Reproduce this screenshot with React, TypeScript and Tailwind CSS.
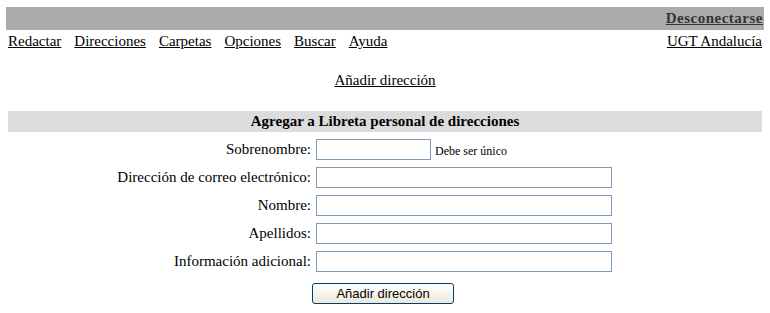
import React from "react";

const links = ["Redactar", "Direcciones", "Carpetas", "Opciones", "Buscar", "Ayuda"];

const fields = [
  { label: "Sobrenombre:", short: true },
  { label: "Dirección de correo electrónico:" },
  { label: "Nombre:" },
  { label: "Apellidos:" },
  { label: "Información adicional:" },
];

const App = () => {
  return (
    <div className="h-[313px] w-[770px] bg-white pt-[7px] font-['Liberation_Serif',serif] text-[15px] text-black">
      <div className="mx-[6px] flex h-[23px] items-center justify-end bg-[#ababab] pr-[1px]">
        <a href="#" className="font-bold tracking-[0.5px] text-[#333] underline">
          Desconectarse
        </a>
      </div>

      <div className="flex h-[22px] items-center justify-between px-[8px]">
        <div className="flex gap-[13px]">
          {links.map((l) => (
            <a key={l} href="#" className="underline">
              {l}
            </a>
          ))}
        </div>
        <a href="#" className="underline">
          UGT Andalucía
        </a>
      </div>

      <div className="mt-[17px] flex justify-center">
        <a href="#" className="underline">
          Añadir dirección
        </a>
      </div>

      <div className="mx-[8px] mt-[19px] flex h-[21px] items-center justify-center bg-[#dcdcdc] font-bold">
        Agregar a Libreta personal de direcciones
      </div>

      <div className="mt-[7px] grid grid-cols-[312px_1fr] gap-y-[7px]">
        {fields.map((f) => (
          <React.Fragment key={f.label}>
            <label className="flex h-[21px] items-center justify-end pr-[1px]">{f.label}</label>
            <div className="flex items-center pl-[4px]">
              <input
                className={
                  f.short
                    ? "h-[21px] w-[115px] border border-[#7f9db9] bg-white"
                    : "h-[21px] w-[296px] border border-[#7f9db9] bg-white"
                }
              />
              {f.short && <span className="ml-[4px] mt-[3px] text-[12px]">Debe ser único</span>}
            </div>
          </React.Fragment>
        ))}
        <div />
        <div className="pt-[3px]">
          <button className="h-[21px] w-[142px] rounded-[3px] border border-[#003c74] bg-gradient-to-b from-white to-[#ece9d8] font-['Liberation_Sans',sans-serif] text-[13px] text-black">
            Añadir dirección
          </button>
        </div>
      </div>
    </div>
  );
};

export default App;
